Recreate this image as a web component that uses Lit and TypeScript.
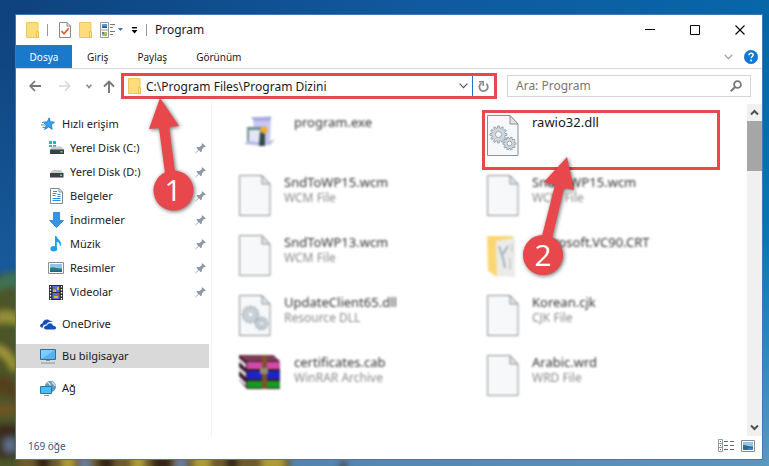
import { LitElement, html, svg, css, nothing, TemplateResult } from "lit";
import { customElement } from "lit/decorators.js";
import { classMap } from "lit/directives/class-map.js";

const icon = (w: number, h: number, body: unknown) =>
  html`<svg width=${w} height=${h} viewBox="0 0 ${w} ${h}" fill="none" aria-hidden="true">${body}</svg>`;

const gear = (cx: number, cy: number, r: number, teeth: number) => {
  const pts: string[] = [];
  for (let i = 0; i < teeth; i++) {
    [[-0.3, 0.78], [-0.2, 1], [0.2, 1], [0.3, 0.78]].forEach(([o, k]) => {
      const a = ((i + o) * 2 * Math.PI) / teeth;
      pts.push(`${(cx + Math.cos(a) * r * k).toFixed(2)},${(cy + Math.sin(a) * r * k).toFixed(2)}`);
    });
  }
  return svg`<polygon points=${pts.join(" ")} fill="#cfd7dd" stroke="#8c99a3" stroke-width=".8"/>
    <circle cx=${cx} cy=${cy} r=${r * 0.36} fill="#f6f8f9" stroke="#8c99a3" stroke-width=".8"/>`;
};

const page = svg`<path d="M1.5 1.5h22.500l8 8.500v31.500H1.500z" fill="#f6f8fa" stroke="#8d9093"/>
  <path d="M24 1.500V10h8z" fill="#e3e6e8" stroke="#8d9093"/>`;

const art = {
  folder: icon(13, 16, svg`<path d="M.5.500h11.500v9.500l1 .500v5H.500z" fill="#fcdc7c" stroke="#f0c75c"/>
    <path d="M10.500 15V9.500l2 .500v5z" fill="#ffe9a4" stroke="#e5b73f" stroke-width=".8"/>`),
  sheet: icon(12, 16, svg`<path d="M.5.500h7.500l3.500 3.500v11.500H.500z" fill="#fff" stroke="#8a8a8a"/>
    <path d="M8 .500V4h3.500" stroke="#8a8a8a"/><path d="m2.500 9 2.500 2.800 4.700-5.600" stroke="#f0562a" stroke-width="1.700"/>`),
  views: icon(23, 16, svg`<path d="M.5.500h8v15h-8zM.500 8h8" fill="#fff" stroke="#999"/>
    <path d="M2 2h5v4H2z" fill="#4b9bea"/><path d="M2 4.500h5V6H2z" fill="#1d5d8c"/><path d="M2 10h5v4H2z" fill="#9dc37e"/>
    <path d="M2 10h2v2H2z" fill="#3b83d8"/><path d="M4.500 12H7v2H4.500z" fill="#d9a13b"/>
    <path d="M10 2.500h5M10 5.500h3M10 9.500h5M10 12.500h3" stroke="#777"/><path d="M18 6h5L20.500 9z" fill="#3f77ba"/>`),
  customize: icon(7, 7, svg`<path d="M1 .7h5" stroke="#000" stroke-width="1.400"/><path d="M.500 3h6l-3 3.500z" fill="#000"/>`),
  minimize: icon(10, 10, svg`<path d="M0 4.500h10" stroke="#000"/>`),
  maximize: icon(10, 10, svg`<path d="M.5.500h9v9h-9z" stroke="#000"/>`),
  close: icon(10, 10, svg`<path d="m.5.500 9 9m0-9-9 9" stroke="#000" stroke-width="1.100"/>`),
  expand: icon(9, 6, svg`<path d="m.7.700 3.800 4 3.800-4" stroke="#a6a6a6" stroke-width="1.300"/>`),
  help: icon(14, 14, svg`<circle cx="7" cy="7" r="6.700" fill="#0b79d8" stroke="#1467b3" stroke-width=".6"/>
    <path d="M5 5.300C5 3.700 6 3.200 7.100 3.200c1.200 0 2.100.7 2.100 1.800 0 1.500-2 1.600-2 3.200" stroke="#fff" stroke-width="1.500"/><circle cx="7.200" cy="10.500" r="1" fill="#fff"/>`),
  back: icon(12, 12, svg`<path d="M12 6H1.500M6 1 1.200 6 6 11" stroke="#777" stroke-width="1.800"/>`),
  forward: icon(12, 12, svg`<path d="M0 6h10.500M6 1l4.800 5L6 11" stroke="#d8d8d8" stroke-width="1.500"/>`),
  recent: icon(6, 5, svg`<path d="m.6.800 2.400 2.700L5.400.8" stroke="#888" stroke-width="1.500"/>`),
  up: icon(12, 13, svg`<path d="M6 13V1.500M1 6.500l5-5 5 5" stroke="#777" stroke-width="1.900"/>`),
  drop: icon(9, 6, svg`<path d="m.6.600 3.900 4L8.400.6" stroke="#555" stroke-width="1.200"/>`),
  refresh: icon(11, 12, svg`<path d="M8.300 3.700A4.200 4.200 0 1 1 3.400 3.300" stroke="#888" stroke-width="1.800"/><path d="M1 1.800h4.200V6" stroke="#888" stroke-width="1.600"/>`),
  search: icon(12, 12, svg`<circle cx="7.500" cy="4.500" r="3.400" stroke="#777" stroke-width="1.800"/><path d="M5 7 .8 11.200" stroke="#777" stroke-width="2"/>`),
  pin: icon(11, 11, svg`<path d="M7.500.3 10.800 3.500 9.800 4.300 9 4 7 6.200 6.900 8.600 6 9.300 3.800 7.300.3 10.800.2 10.300 3.300 6.800 1.400 4.900 2.200 4.100 4.700 4 6.900 2 6.700 1.100z" fill="#8d9aa5"/>`),
  star: icon(14, 14, svg`<path d="M8.200.8 9.300 4.700 13.500 5.200 10.300 7.800 11.200 12.300 7.700 9.900 3.700 12.500 5.300 8 2.300 5.200 6.300 4.800z" fill="#38a2ee" stroke="#1674b8" stroke-width=".8"/>
    <path d="M1 5.500h3M0 8h4M1.500 10.500h2.500" stroke="#3f9ad6"/>`),
  diskC: icon(15, 14, svg`<path d="M0 0h3v3H0zM4 0h3v3H4zM0 4h3v2H0zM4 4h3v2H4z" fill="#14b3f1"/><path d="M3 5.500h9.500L15 9H1z" fill="#c9cccf"/><path d="M1 8.500h14V13H1z" fill="#3c4044"/><path d="M11.500 10h2v1.500h-2z" fill="#59e06a"/>`),
  disk: icon(15, 14, svg`<path d="M3.500 5h8.500l2.500 3.500H1z" fill="#c9cccf"/><path d="M1 8h13.500v4.500H1z" fill="#3c4044"/><path d="M11 9.500h2V11h-2z" fill="#59e06a"/>`),
  documents: icon(13, 16, svg`<path d="M.5.500h8.500l3.500 3.500v11.500H.500z" fill="#fff" stroke="#7e8b94"/><path d="M9 .500V4h3.500" stroke="#7e8b94"/>
    <path d="M3 3.500h4M2.500 5.500h4M2.500 7.500h3M7.500 6.500h3M7.500 8.500h3M2.500 10.500h8M2.500 12.500h8" stroke="#2594d8" stroke-width="1.200"/>`),
  downloads: icon(15, 16, svg`<path d="M4.500.500h6v8h4L7.500 15.500.7 8.500h3.800z" fill="#3295e6" stroke="#237bc8" stroke-width=".8"/>`),
  music: icon(12, 16, svg`<path d="M5 0h1.500C7 3.500 11.700 4 11 9.500L9.800 10c.2-2.700-1-3.700-3-4.300V12H5z" fill="#1aa0ee"/><ellipse cx="3.800" cy="12.700" rx="3.400" ry="2.700" fill="#1aa0ee"/>`),
  pictures: icon(16, 12, svg`<path d="M.5.500h15v11H.500z" fill="#fff" stroke="#8b8f92"/><path d="M2 2h12v8H2z" fill="#8ec5ee"/><path d="M2 6c4-2 6 1 12 .5V10H2z" fill="#2f7d78"/><path d="M2 8.500h12V10H2z" fill="#25618b"/>`),
  videos: icon(14, 15, svg`<path d="M0 0h14v15H0z" fill="#2e2e33"/><path d="M3.500 1h7v6h-7zM3.500 8h7v6h-7z" fill="#4a72d8"/>
    <path d="M4 4.500h3V7H4zM8 2h2v3H8zM5 11h4v2H5z" fill="#e5b62c"/><path d="M8 9h2v2H8zM5 2h2v1.500H5z" fill="#cf4b49"/>
    <path d="M1.500 1v14M12.500 1v14" stroke="#fff" stroke-width="1.200" stroke-dasharray="1.500 1.500"/>`),
  onedrive: icon(16, 11, svg`<path d="M1.200 8.500C-.6 7.600-.2 4.700 2.500 4.500 2.600 1 7.200-1.200 9.800 1.800 11 1.500 12 2 12.600 3 9.500 2.300 7.200 3.600 6.600 5.400 3.600 5.200 2.500 7 3 8.500z" fill="#1550b5"/>
    <path d="M5.800 10.500C3 10.300 3.600 6.500 7 6.600 8 3.500 12.300 3.500 13 6.800c3.300-.2 4 3.300 1.500 3.700z" fill="#1550b5"/>`),
  computer: icon(16, 15, svg`<path d="M.5.500h15v10H.500z" fill="#4fb4f3" stroke="#356d93"/><path d="M1 10 15 1H1z" fill="#7dccfa"/><path d="M6 11.500h4M1 14h14" stroke="#7d93a3"/>`),
  network: icon(16, 15, svg`<circle cx="10.500" cy="5.500" r="5.200" fill="#5f9dba" stroke="#47809e" stroke-width=".6"/><path d="M7.500 1.500c2 1 3 1 2.500 3M12 1c1 2 3 2 3 4" stroke="#cfe8ee" stroke-width="1.400"/>
    <path d="M.5 5.500h11v7H.500z" fill="#4cbcf8" stroke="#2c76a4"/><path d="M4 14.500h5" stroke="#7d93a3"/>`),
  chevUp: icon(9, 7, svg`<path d="M1 5.500 4.500 2 8 5.500" stroke="#505050" stroke-width="2"/>`),
  chevDown: icon(9, 7, svg`<path d="M1 1.500 4.500 5 8 1.500" stroke="#505050" stroke-width="2"/>`),
  details: icon(16, 13, svg`<path d="M.5.500h4v12h-4zM.500 4.500h4M.500 8.500h4" stroke="#999"/><path d="M6 2.500h10M6 6.500h10M6 10.500h10" stroke="#666" stroke-dasharray="4 2"/>
    <path d="M2 2h1v1H2zM2 6h1v1H2z" fill="#357bd0"/><path d="M2 10h1v1H2z" fill="#e02424"/>`),
  thumbs: icon(14, 12, svg`<path d="M.5.500h13v11H.500z" fill="#fff" stroke="#8a8a8a"/><path d="M2 2h10v8H2z" fill="#8dc6f4"/><path d="M2 5c4 0 5 2 10 1.500V10H2z" fill="#2b6d86"/><path d="M7 8h5v2H7z" fill="#3b7fd4"/>`),
  file: icon(34, 43, page),
  dll: icon(34, 43, svg`${page}${gear(12.5, 20.5, 8.5, 12)}${gear(23.5, 29.5, 6.5, 10)}`),
  program: icon(38, 43, svg`<path d="M15 4 33 2 32 31 17 30z" fill="#c9c8f1"/><path d="M13 3h21l-3 4H16z" fill="#a9a8e2"/><path d="M9 13h17v17H9z" fill="#6f8f8c"/><path d="M11 16h12v13H11z" fill="#e4e6f4"/>
    <path d="M6 30l4-3 20 2-4 3z" fill="#b9b8ea"/><path d="M22 17h5v15h-6z" fill="#2f4b4c"/><circle cx="26" cy="16" r="3.500" fill="#f0ac2c"/><path d="m29 29 8-4-5 6z" fill="#b5b5cc"/>`),
  folderBig: icon(34, 43, svg`<path d="M1 2h26v8L11 43 2 37z" fill="#fbd774"/><path d="m10 7 19-3v39l-18-1z" fill="#ecebea"/><path d="m13 12 4 12 2 10M17 20l5-8" stroke="#9fb1bd" stroke-width="2"/><path d="M26 10v8m-2 6v12" stroke="#cfcfcf" stroke-width="2"/>`),
  winrar: icon(43, 36, svg`<path d="M1 1h34l7 7v27H9L1 26z" fill="#3c1b2c"/><path d="M1 1h34l7 6H8z" fill="#7c3c55"/><path d="M9 8h33v7H9z" fill="#d24aa9"/><path d="M9 17h33v8H9z" fill="#1b25c6"/><path d="M9 27h33v7H9z" fill="#159b22"/>
    <path d="m1 4 7 6v4L1 8zm0 9 7 6v4l-7-6zm0 9 7 7v3l-7-6z" fill="#e8e4ea"/><path d="M24 1h5v34h-5z" fill="#80512d"/><path d="M22 14h8v6h-8z" fill="#958b73"/>`),
};

interface NavItem { label: string; icon: TemplateResult; child?: boolean; current?: boolean }
const NAV: NavItem[][] = [
  [
    { label: "Hızlı erişim", icon: art.star },
    { label: "Yerel Disk (C:)", icon: art.diskC, child: true },
    { label: "Yerel Disk (D:)", icon: art.disk, child: true },
    { label: "Belgeler", icon: art.documents, child: true },
    { label: "İndirmeler", icon: art.downloads, child: true },
    { label: "Müzik", icon: art.music, child: true },
    { label: "Resimler", icon: art.pictures, child: true },
    { label: "Videolar", icon: art.videos, child: true },
  ],
  [{ label: "OneDrive", icon: art.onedrive }],
  [{ label: "Bu bilgisayar", icon: art.computer, current: true }],
  [{ label: "Ağ", icon: art.network }],
];

interface FileItem { name: string; type?: string; icon: TemplateResult; wide?: boolean; target?: boolean }
const FILES: FileItem[] = [
  { name: "program.exe", icon: art.program, wide: true },
  { name: "rawio32.dll", icon: art.dll, target: true },
  { name: "SndToWP15.wcm", type: "WCM File", icon: art.file },
  { name: "SndToWP15.wcm", type: "WCM File", icon: art.file },
  { name: "SndToWP13.wcm", type: "WCM File", icon: art.file },
  { name: "Microsoft.VC90.CRT", icon: art.folderBig },
  { name: "UpdateClient65.dll", type: "Resource DLL", icon: art.dll },
  { name: "Korean.cjk", type: "CJK File", icon: art.file },
  { name: "certificates.cab", type: "WinRAR Archive", icon: art.winrar, wide: true },
  { name: "Arabic.wrd", type: "WRD File", icon: art.file },
];

const reset = css`
  * { box-sizing: border-box; }
  button, input { font: inherit; color: inherit; background: none; border: 0; padding: 0; margin: 0; min-width: 0; outline: none; }
  button { display: flex; align-items: center; justify-content: center; }
  a { color: inherit; text-decoration: none; }
  svg { display: block; flex: none; }
`;

@customElement("desktop-wallpaper")
class DesktopWallpaper extends LitElement {
  static styles = css`
    :host { display: block; overflow: hidden; background: linear-gradient(90deg, #0e427d, #1159a0 55%, #0667a8); }
    svg { display: block; width: 100%; height: 100%; }
  `;
  render() {
    return html`<svg viewBox="0 0 769 466" preserveAspectRatio="none" aria-hidden="true">
      <defs>
        <linearGradient id="left" x2="0" y2="1"><stop stop-color="#0e427d"/><stop offset=".55" stop-color="#17599a"/><stop offset="1" stop-color="#35608a"/></linearGradient>
        <linearGradient id="right" x2="0" y2="1"><stop stop-color="#0465a6"/><stop offset=".5" stop-color="#0877b7"/><stop offset="1" stop-color="#599abf"/></linearGradient>
        <linearGradient id="floor"><stop stop-color="#4c79a2"/><stop offset="1" stop-color="#5a97bd"/></linearGradient>
        <filter id="soft"><feGaussianBlur stdDeviation="3"/></filter>
      </defs>
      <path d="M0 14h16v452H0z" fill="url(#left)"/>
      <path d="M762 14h7v452h-7z" fill="url(#right)"/>
      <path d="M0 459h765v7H0z" fill="url(#floor)"/>
      <g filter="url(#soft)">
        <path d="M-6 276 22 270V472H-6z" fill="#4b5526"/>
        <path d="M-4 282q12-14 24-6v14q-12-8-24 4z" fill="#3f7252"/>
        <path d="M-4 312q16-4 24 4v10q-12-6-24-2z" fill="#95903a"/>
        <path d="M-4 344q16 4 22 24l-6 4q-4-14-16-18z" fill="#a3983a"/>
        <path d="M-4 376q10-4 22 10v20q-10-14-22-12z" fill="#54401c"/>
        <path d="M-4 404h20v12H-4z" fill="#6d5424"/>
        <path d="M-4 424h24v34H-4z" fill="#3a2a1c"/>
        <path d="M4 438h12v14H4z" fill="#5d7083"/>
        <path d="M18 456h272v14H18z" fill="#6f5a20"/>
        <path d="M36 456h14v14H36zM98 456h16v14H98zM152 456h20v14h-20zM226 456h12v14h-12z" fill="#34240f"/>
        <path d="M62 456h12v14H62zM132 456h12v14h-12zM194 456h16v14h-16zM262 456h22v14h-22z" fill="#b39d2c"/>
        <path d="M80 458h10v12H80zM176 458h10v12h-10z" fill="#68829c"/>
        <path d="m338 468 8-10v12z" fill="#453e38"/>
      </g>
    </svg>`;
  }
}

@customElement("nav-pane")
class NavPane extends LitElement {
  static styles = [reset, css`
    :host { display: block; padding-top: 9px; font-size: 11px; }
    ul { list-style: none; margin: 0 0 8px; padding: 0; }
    .item { display: flex; align-items: center; height: 24px; padding: 0 3px 0 24px; }
    .item.child { padding-left: 32px; }
    .item.current { background: #d9d9d9; }
    .glyph { display: flex; justify-content: center; width: 16px; margin-right: 6px; }
    .label { flex: 1; white-space: nowrap; }
  `];
  render() {
    return html`<nav aria-label="Gezinti">${NAV.map((group) => html`<ul>${group.map((n) => html`
      <li><a href="#" class=${classMap({ item: true, child: !!n.child, current: !!n.current })}>
        <span class="glyph">${n.icon}</span><span class="label">${n.label}</span>${n.child ? art.pin : nothing}
      </a></li>`)}</ul>`)}</nav>`;
  }
}

@customElement("file-grid")
class FileGrid extends LitElement {
  static styles = [reset, css`
    :host { display: block; padding: 7px 0 0 22px; }
    .grid { display: grid; grid-template-columns: repeat(2, minmax(0, 238px)); column-gap: 10px; grid-auto-rows: 60px; }
    .tile { display: flex; align-items: flex-start; justify-content: flex-start; gap: 12px; padding: 4px; text-align: left; line-height: 16px; }
    .faded { filter: blur(1px); }
    .target { border: 3px solid #e8474b; padding: 1px; }
    .wide .pic { width: 44px; }
    .name, .type { display: block; white-space: nowrap; }
    .name { font-size: 13px; }
    .faded .name { color: #333; }
    .type { color: #8a8a8a; }
  `];
  render() {
    return html`<div class="grid">${FILES.map((f) => html`
      <button class=${classMap({ tile: true, faded: !f.target, target: !!f.target, wide: !!f.wide })}>
        <span class="pic">${f.icon}</span>
        <span><span class="name">${f.name}</span>${f.type ? html`<span class="type">${f.type}</span>` : nothing}</span>
      </button>`)}</div>`;
  }
}

@customElement("step-markers")
class StepMarkers extends LitElement {
  static styles = css`
    :host { display: block; pointer-events: none; }
    svg { display: block; overflow: visible; }
    .shape { fill: #e8474b; filter: drop-shadow(1px 1px 2px rgba(0, 0, 0, 0.6)); }
    text { font: 30px "Open Sans", "Noto Sans", sans-serif; fill: #fff; text-anchor: middle; }
  `;
  render() {
    return html`<svg width="769" height="466" viewBox="0 0 769 466" role="img" aria-label="Adım 1 ve 2">
      <g class="shape"><path d="M160 98 179 126 169 127 175 172 165 173 159 128 149 129z"/><circle cx="173.500" cy="190.500" r="20"/></g>
      <text x="173" y="201">1</text>
      <g class="shape"><path d="M567 157 574 190 564 188 552 238 542 236 555 185 544 182z"/><circle cx="543" cy="255" r="20"/></g>
      <text x="543" y="266">2</text>
    </svg>`;
  }
}

@customElement("app-root")
class AppRoot extends LitElement {
  static styles = [reset, css`
    :host { display: block; position: relative; min-height: 100vh; padding: 14px 6px 6px 15px; box-sizing: border-box; overflow: hidden;
      font: 12px/16px "Noto Sans", "Open Sans", sans-serif; color: #1a1a1a; }
    desktop-wallpaper, step-markers { position: absolute; inset: 0; }
    .window { position: relative; display: flex; flex-direction: column; min-height: calc(100vh - 20px); background: #fff; border: 1px solid #3f78bd; }
    .title { display: flex; align-items: center; height: 30px; padding-left: 10px; }
    .quick { display: flex; align-items: center; gap: 8px; }
    .bar { width: 1px; height: 12px; margin-right: 3px; background: #999; }
    .caption { margin: 0 auto 0 5px; font: inherit; }
    .control { width: 45px; height: 30px; }
    .tabs { display: flex; align-items: stretch; height: 24px; border-bottom: 1px solid #d8d8d8; }
    .tab { padding: 0 14px; margin-right: 1px; font-size: 10px; }
    .tab.file { width: 56px; padding: 0; background: #1979ca; color: #fff; }
    .tabs .spacer { flex: 1; }
    .expand { margin-right: 11px; }
    .help { margin-right: 4px; }
    .address-row { display: grid; grid-template-columns: 92px minmax(0, 376fr) minmax(0, 254fr); align-items: center; height: 34px; padding: 0 11px 0 13px; }
    .arrows { display: flex; align-items: center; gap: 18px; }
    .arrows .tight { margin: 0 -7px 0 -3px; }
    .address { display: flex; align-items: center; height: 26px; border: 3px solid #e8474b; padding-left: 4px; }
    .address input { flex: 1; margin-left: 5px; height: 20px; }
    .drop { width: 19px; height: 20px; border-right: 1px solid #1979ca; }
    .refresh { width: 21px; height: 20px; }
    .find { display: flex; align-items: center; height: 22px; margin-left: 10px; padding: 0 8px; border: 1px solid #d5d5d5; }
    .find input { flex: 1; }
    .find input::placeholder { color: #777; opacity: 1; }
    .body { display: flex; flex: 1; }
    nav-pane { width: 193px; }
    file-grid { flex: 1; margin-left: 2px; border-left: 1px solid #f0f0f0; }
    .scroll { display: flex; flex-direction: column; width: 15px; margin-top: 1px; background: #f0f0f0; }
    .scroll button { height: 17px; }
    .thumb { height: 50px; background: #a6a6a6; }
    .rest { flex: 1; }
    .status { display: flex; align-items: center; gap: 7px; height: 23px; padding: 0 7px 4px 12px; color: #3d5277; }
    .count { margin: 0 auto 0 0; font-size: 10px; }
  `];
  render() {
    return html`
      <desktop-wallpaper></desktop-wallpaper>
      <main class="window">
        <header class="title">
          <div class="quick">
            ${art.folder}<span class="bar"></span>
            <button aria-label="Özellikler">${art.sheet}</button>
            <button aria-label="Yeni klasör">${art.folder}</button>
            <button aria-label="Görünüm">${art.views}</button>
            <button aria-label="Özelleştir">${art.customize}</button>
            <span class="bar"></span>
          </div>
          <h1 class="caption">Program</h1>
          <button class="control" aria-label="Simge durumuna küçült">${art.minimize}</button>
          <button class="control" aria-label="Ekranı kapla">${art.maximize}</button>
          <button class="control" aria-label="Kapat">${art.close}</button>
        </header>
        <div class="tabs">
          <button class="tab file">Dosya</button><button class="tab">Giriş</button>
          <button class="tab">Paylaş</button><button class="tab">Görünüm</button>
          <span class="spacer"></span>
          <button class="expand" aria-label="Şeridi genişlet">${art.expand}</button>
          <button class="help" aria-label="Yardım">${art.help}</button>
        </div>
        <div class="address-row">
          <div class="arrows">
            <button aria-label="Geri">${art.back}</button><button aria-label="İleri">${art.forward}</button>
            <button class="tight" aria-label="Son konumlar">${art.recent}</button><button aria-label="Yukarı">${art.up}</button>
          </div>
          <div class="address">
            ${art.folder}<input aria-label="Adres" .value=${"C:\\Program Files\\Program Dizini"} />
            <button class="drop" aria-label="Önceki konumlar">${art.drop}</button>
            <button class="refresh" aria-label="Yenile">${art.refresh}</button>
          </div>
          <div class="find"><input aria-label="Ara" placeholder="Ara: Program" /><button aria-label="Ara">${art.search}</button></div>
        </div>
        <div class="body">
          <nav-pane></nav-pane>
          <file-grid></file-grid>
          <div class="scroll">
            <button aria-label="Yukarı kaydır">${art.chevUp}</button><span class="thumb"></span><span class="rest"></span>
            <button aria-label="Aşağı kaydır">${art.chevDown}</button>
          </div>
        </div>
        <footer class="status">
          <p class="count">169 öğe</p>
          <button aria-label="Ayrıntılar">${art.details}</button><button aria-label="Büyük simgeler">${art.thumbs}</button>
        </footer>
      </main>
      <step-markers></step-markers>`;
  }
}
